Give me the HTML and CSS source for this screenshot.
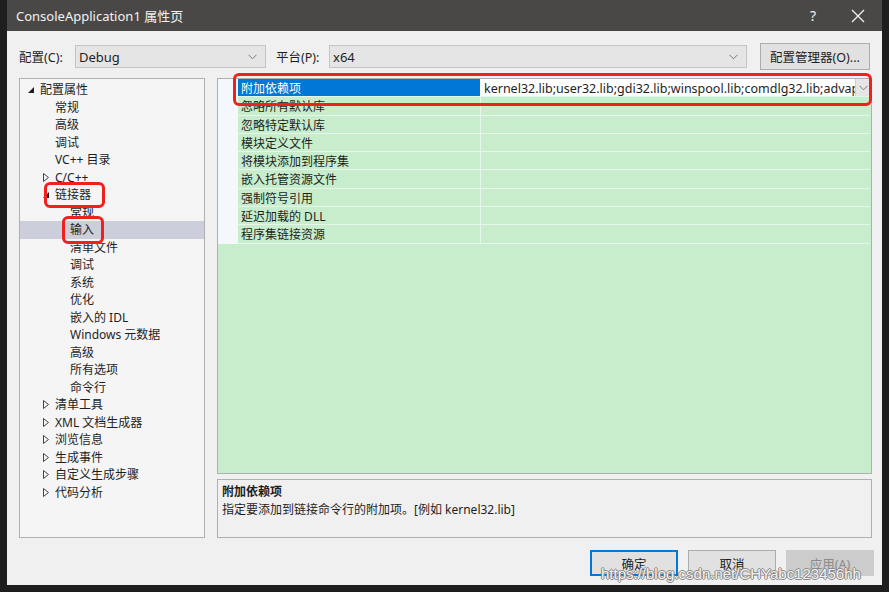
FILE: index.html
```html
<!DOCTYPE html>
<html lang="zh">
<head>
<meta charset="utf-8">
<link rel="stylesheet" href="styles.css">
</head>
<body>
<div class="window">
  <div class="titlebar">
    <span class="title">ConsoleApplication1 属性页</span>
    <span class="tb-btns">
      <span class="help">?</span>
      <svg class="close" width="14" height="14" viewBox="0 0 14 14"><path d="M1 1 L13 13 M13 1 L1 13" stroke="#f2f2f2" stroke-width="1.3" fill="none"/></svg>
    </span>
  </div>
  <div class="body">
    <div class="toprow">
      <span class="lbl l1">配置(C):</span>
      <div class="combo c1"><span>Debug</span><svg width="9" height="6" viewBox="0 0 9 6"><path d="M0.5 0.8 L4.5 4.8 L8.5 0.8" stroke="#777" fill="none"/></svg></div>
      <span class="lbl l2">平台(P):</span>
      <div class="combo c2"><span>x64</span><svg width="9" height="6" viewBox="0 0 9 6"><path d="M0.5 0.8 L4.5 4.8 L8.5 0.8" stroke="#777" fill="none"/></svg></div>
      <div class="btn mgr">配置管理器(O)...</div>
    </div>
    <div class="main">
      <div class="tree">
        <div class="node lv0"><span class="arw"><svg width="6" height="6" viewBox="0 0 6 6"><path d="M6 0 L6 6 L0 6 Z" fill="#1e1e1e"/></svg></span>配置属性</div>
        <div class="node lv1"><span class="arw"></span>常规</div>
        <div class="node lv1"><span class="arw"></span>高级</div>
        <div class="node lv1"><span class="arw"></span>调试</div>
        <div class="node lv1"><span class="arw"></span>VC++ 目录</div>
        <div class="node lv1"><span class="arw"><svg width="6" height="9" viewBox="0 0 6 9"><path d="M0.5 0.5 L5.5 4.5 L0.5 8.5 Z" fill="none" stroke="#444"/></svg></span>C/C++</div>
        <div class="node lv1"><span class="arw"><svg width="6" height="6" viewBox="0 0 6 6"><path d="M6 0 L6 6 L0 6 Z" fill="#1e1e1e"/></svg></span>链接器</div>
        <div class="node lv2"><span class="arw"></span>常规</div>
        <div class="node lv2 sel"><span class="arw"></span>输入</div>
        <div class="node lv2"><span class="arw"></span>清单文件</div>
        <div class="node lv2"><span class="arw"></span>调试</div>
        <div class="node lv2"><span class="arw"></span>系统</div>
        <div class="node lv2"><span class="arw"></span>优化</div>
        <div class="node lv2"><span class="arw"></span>嵌入的 IDL</div>
        <div class="node lv2"><span class="arw"></span>Windows 元数据</div>
        <div class="node lv2"><span class="arw"></span>高级</div>
        <div class="node lv2"><span class="arw"></span>所有选项</div>
        <div class="node lv2"><span class="arw"></span>命令行</div>
        <div class="node lv1"><span class="arw"><svg width="6" height="9" viewBox="0 0 6 9"><path d="M0.5 0.5 L5.5 4.5 L0.5 8.5 Z" fill="none" stroke="#444"/></svg></span>清单工具</div>
        <div class="node lv1"><span class="arw"><svg width="6" height="9" viewBox="0 0 6 9"><path d="M0.5 0.5 L5.5 4.5 L0.5 8.5 Z" fill="none" stroke="#444"/></svg></span>XML 文档生成器</div>
        <div class="node lv1"><span class="arw"><svg width="6" height="9" viewBox="0 0 6 9"><path d="M0.5 0.5 L5.5 4.5 L0.5 8.5 Z" fill="none" stroke="#444"/></svg></span>浏览信息</div>
        <div class="node lv1"><span class="arw"><svg width="6" height="9" viewBox="0 0 6 9"><path d="M0.5 0.5 L5.5 4.5 L0.5 8.5 Z" fill="none" stroke="#444"/></svg></span>生成事件</div>
        <div class="node lv1"><span class="arw"><svg width="6" height="9" viewBox="0 0 6 9"><path d="M0.5 0.5 L5.5 4.5 L0.5 8.5 Z" fill="none" stroke="#444"/></svg></span>自定义生成步骤</div>
        <div class="node lv1"><span class="arw"><svg width="6" height="9" viewBox="0 0 6 9"><path d="M0.5 0.5 L5.5 4.5 L0.5 8.5 Z" fill="none" stroke="#444"/></svg></span>代码分析</div>
      </div>
      <div class="right">
        <div class="grid">
          <div class="row active"><div class="gut"></div><div class="name">附加依赖项</div><div class="val"><span class="vtext">kernel32.lib;user32.lib;gdi32.lib;winspool.lib;comdlg32.lib;advap</span><span class="dd"><svg width="9" height="6" viewBox="0 0 9 6"><path d="M0.5 0.8 L4.5 4.8 L8.5 0.8" stroke="#777" fill="none"/></svg></span></div></div>
          <div class="row"><div class="gut"></div><div class="name">忽略所有默认库</div><div class="val"></div></div>
          <div class="row"><div class="gut"></div><div class="name">忽略特定默认库</div><div class="val"></div></div>
          <div class="row"><div class="gut"></div><div class="name">模块定义文件</div><div class="val"></div></div>
          <div class="row"><div class="gut"></div><div class="name">将模块添加到程序集</div><div class="val"></div></div>
          <div class="row"><div class="gut"></div><div class="name">嵌入托管资源文件</div><div class="val"></div></div>
          <div class="row"><div class="gut"></div><div class="name">强制符号引用</div><div class="val"></div></div>
          <div class="row"><div class="gut"></div><div class="name">延迟加载的 DLL</div><div class="val"></div></div>
          <div class="row"><div class="gut"></div><div class="name">程序集链接资源</div><div class="val"></div></div>
        </div>
        <div class="desc">
          <div class="dtitle">附加依赖项</div>
          <div class="dtext">指定要添加到链接命令行的附加项。[例如 kernel32.lib]</div>
        </div>
      </div>
    </div>
    <div class="buttons">
      <div class="btn ok">确定</div>
      <div class="btn">取消</div>
      <div class="btn disabled">应用(A)</div>
    </div>
  </div>
  <div class="mark m1"></div>
  <div class="mark m2"></div>
  <div class="mark m3"></div>
  <div class="watermark">https://blog.csdn.net/CHYabc123456hh</div>
</div>
</body>
</html>
```
FILE: styles.css
```css
* { box-sizing: border-box; }
html, body { margin: 0; padding: 0; }
body {
  background: #1e1e1e;
  width: 889px;
  height: 592px;
  overflow: hidden;
  font-family: "Noto Sans", "Noto Sans CJK SC", sans-serif;
  font-size: 12px;
  color: #1e1e1e;
}
.window {
  position: relative;
  margin-left: 7px;
  width: 875px;
  height: 585px;
  background: #f0f0f0;
  display: flex;
  flex-direction: column;
}
.titlebar {
  height: 31px;
  background: #4a4846;
  color: #f2f2f2;
  display: flex;
  align-items: center;
  padding-left: 9px;
  flex-shrink: 0;
}
.title { font-size: 13px; flex: 1; }
.tb-btns { display: flex; align-items: center; }
.help { font-size: 14px; margin-right: 35px; }
.close { margin-right: 17px; }
.body {
  flex: 1;
  display: flex;
  flex-direction: column;
  padding: 0 10px 0 12px;
}
.toprow {
  display: flex;
  align-items: center;
  height: 27px;
  margin-top: 12px;
}
.lbl { white-space: nowrap; font-size: 12.5px; }
.l1 { width: 56px; }
.l2 { width: 53px; margin-left: 10px; }
.combo {
  height: 23px;
  background: #e5e5e5;
  border: 1px solid #c4c4c4;
  display: flex;
  align-items: center;
  justify-content: space-between;
  padding: 0 8px 0 3px;
  font-size: 13px;
}
.c1 { width: 191px; }
.c2 { width: 418px; }
.btn {
  display: flex;
  align-items: center;
  justify-content: center;
  background: #e1e1e1;
  border: 1px solid #adadad;
  height: 27px;
  white-space: nowrap;
}
.mgr { width: 110px; margin-left: 13px; font-size: 12.5px; }
.main {
  display: flex;
  gap: 12px;
  height: 460px;
  margin-top: 8px;
}
.tree {
  width: 186px;
  flex-shrink: 0;
  background: #f5f5f5;
  border: 1px solid #b0b0b0;
  padding-top: 2px;
}
.node {
  height: 17.5px;
  line-height: 17.5px;
  display: flex;
  align-items: center;
  white-space: nowrap;
}
.node.sel { background: #cccedb; }
.arw {
  width: 15px;
  height: 17px;
  display: flex;
  align-items: center;
  padding-left: 3px;
  flex-shrink: 0;
}
.lv0 { padding-left: 5px; }
.lv1 { padding-left: 20px; }
.lv2 { padding-left: 35px; }
.right {
  flex: 1;
  min-width: 0;
  display: flex;
  flex-direction: column;
  gap: 5px;
}
.grid {
  height: 396px;
  background: #c7edcc;
  border: 1px solid #b0b0b0;
  overflow: hidden;
}
.row {
  display: flex;
  height: 18.3px;
}
.gut { width: 20px; background: #f4f7fc; flex-shrink: 0; }
.name {
  width: 243px;
  flex-shrink: 0;
  padding: 1px 0 0 3px;
  line-height: 17.3px;
  border-bottom: 1px solid #e6f6e9;
  border-right: 1px solid #e6f6e9;
  white-space: nowrap;
}
.val {
  flex: 1;
  border-bottom: 1px solid #e6f6e9;
  margin-right: 1px;
  display: flex;
  min-width: 0;
}
.row.active .name { background: #0078d7; color: #fff; border-right-color: #fff; }
.row.active .val { background: #fff; }
.vtext {
  flex: 1;
  min-width: 0;
  overflow: hidden;
  white-space: nowrap;
  padding: 1px 0 0 3px;
  line-height: 17.3px;
  font-size: 12.5px;
}
.dd {
  width: 15px;
  background: #e6e6e6;
  border-left: 1px solid #d0d0d0;
  display: flex;
  align-items: center;
  justify-content: center;
  flex-shrink: 0;
}
.desc {
  height: 59px;
  border: 1px solid #b0b0b0;
  padding: 3px 4px;
}
.dtitle { font-weight: bold; line-height: 18px; }
.dtext { line-height: 18px; }
.buttons {
  display: flex;
  justify-content: flex-end;
  gap: 10px;
  margin-top: 12px;
  margin-right: -2px;
}
.buttons .btn { width: 88px; height: 26px; font-size: 12.5px; }
.btn.ok { border: 2px solid #0078d7; }
.btn.disabled { background: #cccccc; border-color: #cccccc; color: #8a8a8a; }
.mark {
  position: absolute;
  border: 3px solid #f0201c;
  border-radius: 6px;
}
.m1 { left: 226px; top: 73px; width: 639px; height: 33px; }
.m2 { left: 37px; top: 182px; width: 61px; height: 26px; }
.m3 { left: 55px; top: 216px; width: 42px; height: 28px; }
.watermark {
  position: absolute;
  left: 594px;
  top: 565px;
  font-family: "Liberation Sans", sans-serif;
  font-size: 15px;
  color: rgba(255,255,255,0.9);
  text-shadow: 1px 0 0 #8a8a8a, -1px 0 0 #8a8a8a, 0 1px 0 #8a8a8a, 0 -1px 0 #8a8a8a;
  white-space: nowrap;
}
```
